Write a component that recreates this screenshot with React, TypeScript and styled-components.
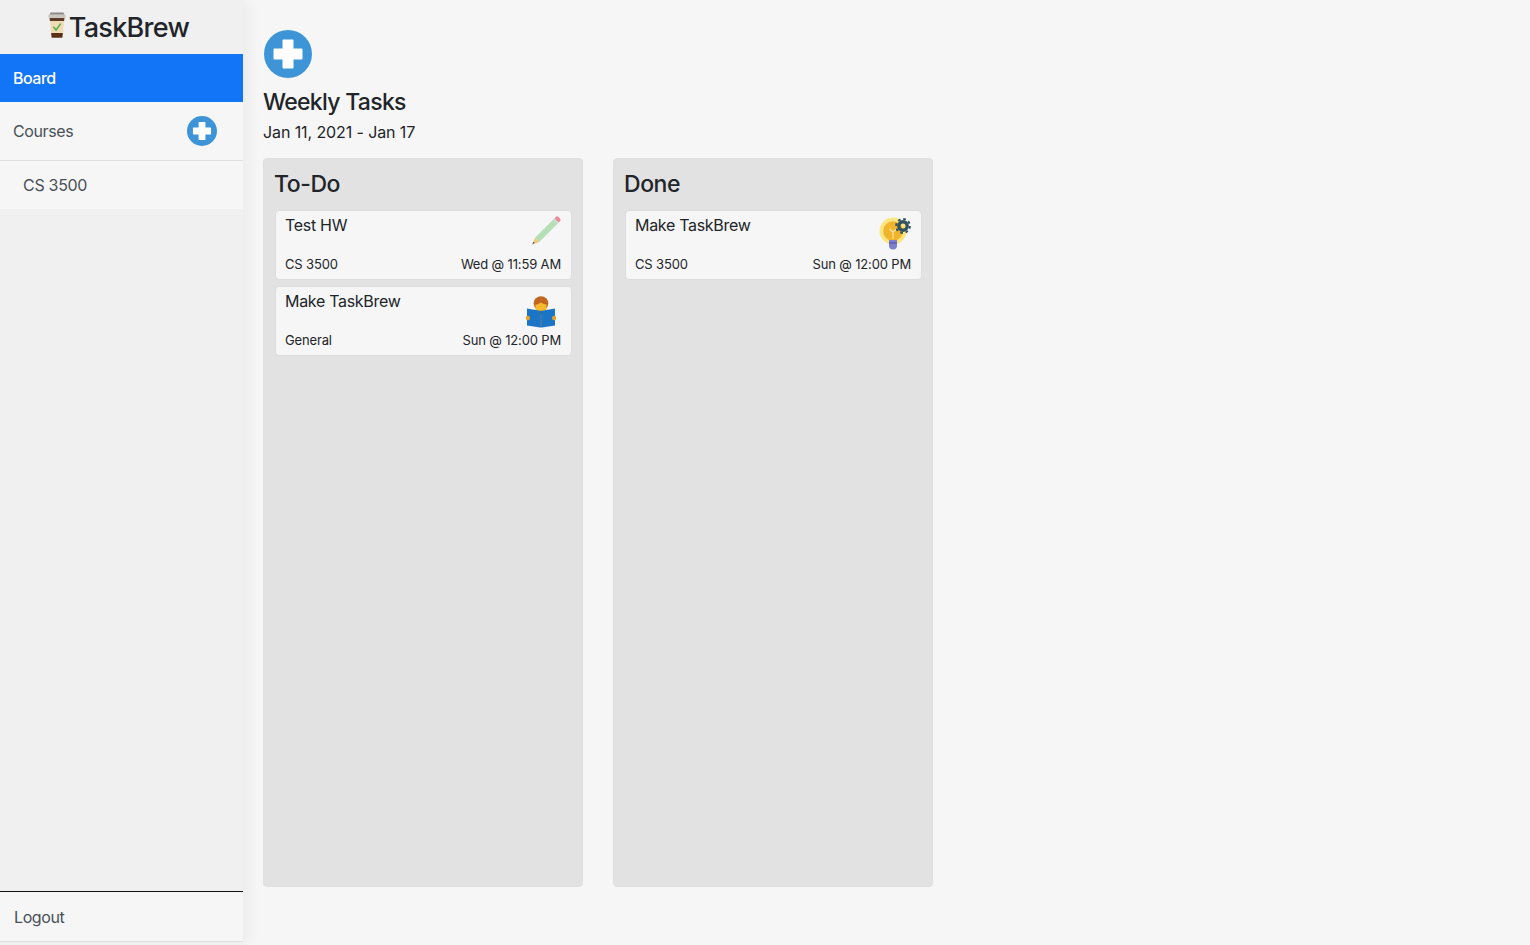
import React from "react";
import styled, { createGlobalStyle } from "styled-components";

const Global = createGlobalStyle`
  * { box-sizing: border-box; }
  html, body { margin: 0; padding: 0; height: 100%; background: #f6f6f6; }
  body { font-family: Inter, "Liberation Sans", sans-serif; color: #212529; overflow: hidden; }
`;

const Shell = styled.div`
  display: flex;
  width: 1530px;
  height: 945px;
  background: #f6f6f6;
`;

const Sidebar = styled.aside`
  width: 243px;
  height: 945px;
  flex: none;
  display: flex;
  flex-direction: column;
  background: #f0f0f0;
  box-shadow: 4px 0 14px rgba(0, 0, 0, 0.05);
`;

const Brand = styled.div`
  height: 54px;
  display: flex;
  align-items: center;
  justify-content: center;
  padding-right: 9px;
  font-size: 27px;
  letter-spacing: -0.7px;
  font-weight: 500;
  color: #212529;
`;

const NavActive = styled.div`
  height: 48px;
  display: flex;
  align-items: center;
  padding: 0 13px;
  background: #1274f6;
  color: #fff;
  font-size: 16px;
  font-weight: 500;
  letter-spacing: -0.5px;
`;

const NavRow = styled.div`
  height: 59px;
  display: flex;
  align-items: center;
  justify-content: space-between;
  padding: 0 26px 0 13px;
  background: #f6f6f6;
  border-bottom: 1px solid #dedede;
  color: #495057;
  font-size: 16px;
  letter-spacing: -0.4px;
`;

const SubItem = styled.div`
  height: 48px;
  display: flex;
  align-items: center;
  padding: 0 23px;
  background: #f6f6f6;
  color: #495057;
  font-size: 16px;
  letter-spacing: -0.3px;
`;

const SideFoot = styled.div`
  margin-top: auto;
  margin-bottom: 3px;
  height: 51px;
  display: flex;
  align-items: center;
  padding: 0 14px;
  background: #f6f6f6;
  border-top: 1px solid #111;
  border-bottom: 1px solid #dedede;
  color: #495057;
  font-size: 16px;
  letter-spacing: -0.4px;
`;

const Main = styled.main`
  flex: 1;
  padding: 30px 20px 0;
  display: flex;
  flex-direction: column;
`;

const AddButton = styled.div`
  line-height: 0;
  margin-left: 1px;
`;

const Title = styled.h1`
  margin: 10px 0 0;
  font-size: 23px;
  line-height: 29px;
  font-weight: 500;
  letter-spacing: -0.7px;
`;

const Dates = styled.div`
  margin-top: 3px;
  font-size: 16px;
  line-height: 24px;
  font-weight: 400;
  letter-spacing: -0.1px;
`;

const Columns = styled.div`
  margin-top: 14px;
  display: flex;
  gap: 30px;
`;

const Column = styled.section`
  width: 320px;
  height: 729px;
  background: #e2e2e2;
  border: 1px solid #dfdfdf;
  border-radius: 4px;
  padding: 10px 10px 0 11px;
  display: flex;
  flex-direction: column;
  gap: 6px;
`;

const ColumnTitle = styled.h2`
  margin: 0 0 5px -1px;
  font-size: 23px;
  line-height: 30px;
  font-weight: 500;
  letter-spacing: -0.45px;
`;

const Card = styled.article`
  position: relative;
  height: 70px;
  background: #f6f6f6;
  border: 1px solid #dcdcdc;
  border-radius: 4px;
  padding: 4px 10px 7px 9px;
  display: flex;
  flex-direction: column;
  justify-content: space-between;
`;

const CardName = styled.div`
  font-size: 16px;
  line-height: 20px;
  font-weight: 400;
  letter-spacing: -0.3px;
`;

const CardFoot = styled.div`
  display: flex;
  justify-content: space-between;
  font-size: 13px;
  line-height: 16px;
  letter-spacing: -0.15px;
`;

const CardIcon = styled.span<{ $top: number; $right: number }>`
  position: absolute;
  top: ${(p) => p.$top}px;
  right: ${(p) => p.$right}px;
  display: block;
  svg { display: block; }
`;

const PlusIcon = ({ size }: { size: number }) => (
  <svg width={size} height={size} viewBox="0 0 48 48">
    <circle cx="24" cy="24" r="24" fill="#3d95d8" />
    <path d="M19.5 9.5h9a1 1 0 0 1 1 1v8h8a1 1 0 0 1 1 1v9a1 1 0 0 1-1 1h-8v8a1 1 0 0 1-1 1h-9a1 1 0 0 1-1-1v-8h-8a1 1 0 0 1-1-1v-9a1 1 0 0 1 1-1h8v-8a1 1 0 0 1 1-1z" fill="#fff" />
  </svg>
);

const CupIcon = () => (
  <svg width="24" height="30" viewBox="0 2 22 28" style={{ display: "block" }}>
    <path d="M5 2.500h12l1 2H4z" fill="#8d8a86" />
    <path d="M3 4.500h16v3H3z" fill="#c9c5bf" />
    <path d="M4 7.500h14l-.4 3H4.400z" fill="#5c3a26" />
    <path d="M4.400 10.500h13.200l-1.100 11H5.500z" fill="#efdcb4" />
    <path d="M5.500 21.500h11l-.5 4.500H6z" fill="#5c3118" />
    <path d="M7.600 15.800l2.500 3 4.400-6" fill="none" stroke="#55b04a" strokeWidth="1.4" />
  </svg>
);

const PencilIcon = () => (
  <svg width="33" height="33" viewBox="0 0 30 30">
    <path d="M5.500 22.500L23 5l3.800 3.800L9.300 26.300z" fill="#b5dfb4" />
    <path d="M22 6l3.800 3.800 1.300-1.300L23.300 4.700z" fill="#d8d8d8" />
    <path d="M23.200 4.800l1.300-1.300a1.500 1.500 0 0 1 2.100 0l1.700 1.700a1.500 1.500 0 0 1 0 2.100l-1.300 1.300z" fill="#e88b94" />
    <path d="M5.500 22.500l3.800 3.800-6.200 2.400z" fill="#eec77d" />
    <path d="M4.100 26l.9 1-2 1.700z" fill="#43435c" />
  </svg>
);

const ReaderIcon = () => (
  <svg width="30" height="33" viewBox="0 0 30 33">
    <circle cx="15" cy="7.500" r="7.300" fill="#c0661f" />
    <path d="M9.500 8.500c2 .5 3.500-1 5.500-2 1.500 1 3.500 2 5.500 2V13a5.500 5.500 0 0 1-11 0z" fill="#f6b92f" />
    <path d="M1 12.500l13.200 2.200V31.500L1 29.500z" fill="#1c74c7" />
    <path d="M29 12.500l-13.200 2.200V31.500L29 29.500z" fill="#1c74c7" />
    <path d="M14.200 14.700h1.600v16.800h-1.600z" fill="#155ea6" />
    <circle cx="1.800" cy="22" r="2.200" fill="#e5a52a" />
    <circle cx="28.200" cy="22" r="2.200" fill="#e5a52a" />
  </svg>
);

const BulbIcon = () => (
  <svg width="32" height="34" viewBox="0 0 32 34">
    <circle cx="14" cy="14" r="13.500" fill="#fbe67f" />
    <circle cx="14" cy="14" r="9.800" fill="#f0b42d" />
    <path d="M10.500 12l3.500 3 3.500-3M14 15v7" fill="none" stroke="#fbe9a7" strokeWidth="1.100" />
    <path d="M10 23h8v5.500a4 4 0 0 1-8 0z" fill="#7f7fd0" />
    <path d="M10 26h8" stroke="#4f4fa6" strokeWidth="1" />
    <circle cx="24" cy="9" r="4.200" fill="none" stroke="#33515e" strokeWidth="3.400" />
    <circle cx="24" cy="9" r="6.900" fill="none" stroke="#33515e" strokeWidth="2" strokeDasharray="2.700 2.720" />
  </svg>
);

type TaskProps = { name: string; course: string; due: string; icon: React.ReactNode; top: number; right: number };

const Task = ({ name, course, due, icon, top, right }: TaskProps) => (
  <Card>
    <CardName>{name}</CardName>
    <CardIcon $top={top} $right={right}>{icon}</CardIcon>
    <CardFoot>
      <span>{course}</span>
      <span>{due}</span>
    </CardFoot>
  </Card>
);

export default function App() {
  return (
    <Shell>
      <Global />
      <Sidebar>
        <Brand>
          <CupIcon />
          TaskBrew
        </Brand>
        <NavActive>Board</NavActive>
        <NavRow>
          Courses
          <PlusIcon size={30} />
        </NavRow>
        <SubItem>CS 3500</SubItem>
        <SideFoot>Logout</SideFoot>
      </Sidebar>
      <Main>
        <AddButton>
          <PlusIcon size={48} />
        </AddButton>
        <Title>Weekly Tasks</Title>
        <Dates>Jan 11, 2021 - Jan 17</Dates>
        <Columns>
          <Column>
            <ColumnTitle>To-Do</ColumnTitle>
            <Task name="Test HW" course="CS 3500" due="Wed @ 11:59 AM" icon={<PencilIcon />} top={2} right={9} />
            <Task name="Make TaskBrew" course="General" due="Sun @ 12:00 PM" icon={<ReaderIcon />} top={9} right={15} />
          </Column>
          <Column>
            <ColumnTitle>Done</ColumnTitle>
            <Task name="Make TaskBrew" course="CS 3500" due="Sun @ 12:00 PM" icon={<BulbIcon />} top={6} right={10} />
          </Column>
        </Columns>
      </Main>
    </Shell>
  );
}
